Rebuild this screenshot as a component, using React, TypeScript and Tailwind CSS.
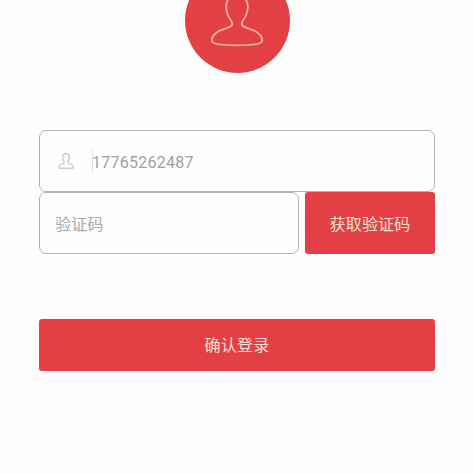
import { useState } from "react";

interface IPersonIconProps {
  className?: string;
}

function AvatarIcon({ className }: IPersonIconProps) {
  return (
    <svg
      viewBox="0 0 54 54"
      fill="none"
      stroke="currentColor"
      strokeWidth={1.8}
      strokeLinejoin="round"
      className={className}
      aria-hidden="true"
    >
      <path d="M27 2C20 2 16.200 7 16.200 14C16.200 20 18.500 24 20.800 27.300C22.500 29.800 22.800 31.500 21.500 32.800C19 35 13 36 9 38C4.500 40.500 1.800 43.500 1.800 47.500C1.800 51 9 52.300 27 52.300C45 52.300 52.200 51 52.200 47.500C52.200 43.500 49.500 40.500 45 38C41 36 35 35 32.500 32.800C31.200 31.500 31.500 29.800 33.200 27.300C35.500 24 37.800 20 37.800 14C37.800 7 34 2 27 2Z" />
    </svg>
  );
}

function UserIcon({ className }: IPersonIconProps) {
  return (
    <svg
      viewBox="0 0 16 16"
      fill="none"
      stroke="currentColor"
      strokeWidth={1.4}
      strokeLinejoin="round"
      className={className}
      aria-hidden="true"
    >
      <path d="M8 .8C5.600 .8 4.600 2.300 4.600 4.200C4.600 6.200 5.400 7.500 6.100 8.400V10.300L2.300 11.600C1.200 12 .7 12.800 .7 14.200C.7 14.900 1.200 15.200 2 15.200H14C14.800 15.200 15.300 14.900 15.300 14.200C15.300 12.800 14.800 12 13.700 11.600L9.900 10.300V8.400C10.600 7.500 11.400 6.200 11.400 4.200C11.400 2.300 10.400 .8 8 .8Z" />
    </svg>
  );
}

export default function App() {
  const [phone, setPhone] = useState("17765262487");
  const [code, setCode] = useState("");

  return (
    <main className="h-[474px] w-[474px] overflow-hidden bg-[#fefefe] font-['Roboto','Noto_Sans_CJK_SC',sans-serif] text-base">
      <div className="mx-auto -mt-8 flex size-[105px] items-center justify-center rounded-full bg-[#e34045]">
        <AvatarIcon className="mt-[-2px] size-[54px] text-[#f9aea6]" />
      </div>

      <form
        className="mx-[39px] mt-[57px]"
        onSubmit={(event) => event.preventDefault()}
      >
        <label className="flex h-[62px] items-center rounded-[7px] border border-[#b0b0b0] pl-[18px]">
          <UserIcon className="size-4 text-[#cacaca]" />
          <span className="ml-[18px] h-6 w-px bg-[#e2e2e2]" />
          <input
            type="tel"
            aria-label="手机号"
            value={phone}
            onChange={(event) => setPhone(event.target.value)}
            className="-ml-px min-w-0 flex-1 pt-[3px] text-base tracking-[0.25px] text-[#a0a0a0] outline-none"
          />
        </label>

        <div className="flex h-[62px] gap-1.5">
          <input
            type="text"
            placeholder="验证码"
            value={code}
            onChange={(event) => setCode(event.target.value)}
            className="min-w-0 flex-1 rounded-[7px] border border-[#b0b0b0] px-[15px] pt-[3px] text-base tracking-[0.2px] text-[#a0a0a0] outline-none placeholder:text-[#a8a8a8]"
          />
          <button
            type="button"
            className="w-[130px] rounded-[3px] bg-[#e34045] pt-[3px] text-base tracking-[0.2px] text-[#ffe0d8]"
          >
            获取验证码
          </button>
        </div>

        <button
          type="submit"
          className="mt-[65px] h-[52px] w-full rounded-[3px] bg-[#e34045] pt-[2px] text-base tracking-[0.2px] text-[#ffe0d8]"
        >
          确认登录
        </button>
      </form>
    </main>
  );
}
